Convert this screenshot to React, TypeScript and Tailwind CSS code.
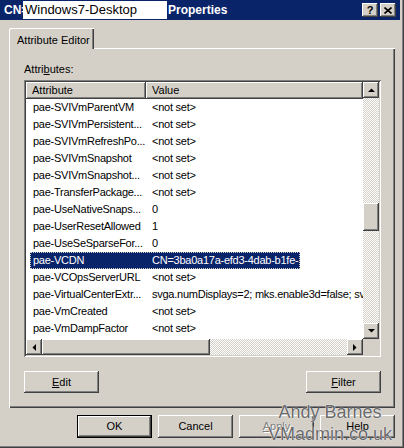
import React from 'react';

// classic 3D edges
const raised =
  'shadow-[inset_-1px_-1px_#404040,inset_1px_1px_#ffffff,inset_-2px_-2px_#808080,inset_2px_2px_#d4d0c8]';
const sunken =
  'shadow-[inset_1px_1px_#808080,inset_-1px_-1px_#ffffff,inset_2px_2px_#404040,inset_-2px_-2px_#d4d0c8]';
const checker =
  'bg-[conic-gradient(#ffffff_90deg,#d4d0c8_90deg_180deg,#ffffff_180deg_270deg,#d4d0c8_270deg)] bg-[length:2px_2px]';

interface Row {
  name: string;
  value: string;
  selected?: boolean;
}

const rows: Row[] = [
  { name: 'pae-SVIVmParentVM', value: '<not set>' },
  { name: 'pae-SVIVmPersistent...', value: '<not set>' },
  { name: 'pae-SVIVmRefreshPo...', value: '<not set>' },
  { name: 'pae-SVIVmSnapshot', value: '<not set>' },
  { name: 'pae-SVIVmSnapshot...', value: '<not set>' },
  { name: 'pae-TransferPackage...', value: '<not set>' },
  { name: 'pae-UseNativeSnaps...', value: '0' },
  { name: 'pae-UserResetAllowed', value: '1' },
  { name: 'pae-UseSeSparseFor...', value: '0' },
  { name: 'pae-VCDN', value: 'CN=3ba0a17a-efd3-4dab-b1fe-', selected: true },
  { name: 'pae-VCOpsServerURL', value: '<not set>' },
  { name: 'pae-VirtualCenterExtr...', value: 'svga.numDisplays=2; mks.enable3d=false; svga.vramSize=' },
  { name: 'pae-VmCreated', value: '<not set>' },
  { name: 'pae-VmDampFactor', value: '<not set>' },
  { name: 'pae-VmGuestCustomiz...', value: '{F7a61d9d-4FC3-4D2F-9B1F-7C2D}' },
];

const Arrow: React.FC<{ dir: 'up' | 'down' | 'left' | 'right' }> = ({ dir }) => {
  const pts = {
    up: '0,4 7,4 3.5,0.5',
    down: '0,0 7,0 3.5,3.5',
    left: '4,0 4,7 0.5,3.5',
    right: '0,0 0,7 3.5,3.5',
  }[dir];
  const vertical = dir === 'up' || dir === 'down';
  return (
    <svg width={vertical ? 7 : 4} height={vertical ? 4 : 7} viewBox={vertical ? '0 0 7 4' : '0 0 4 7'}>
      <polygon points={pts} fill="#000" />
    </svg>
  );
};

const ScrollButton: React.FC<{ dir: 'up' | 'down' | 'left' | 'right' }> = ({ dir }) => (
  <div className={`flex h-[16px] w-[16px] shrink-0 items-center justify-center bg-[#d4d0c8] ${raised}`}>
    <Arrow dir={dir} />
  </div>
);

const Button: React.FC<{ children: React.ReactNode; tall?: boolean; isDefault?: boolean; disabled?: boolean }> = ({
  children,
  tall,
  isDefault,
  disabled,
}) => (
  <div
    className={`flex w-[75px] items-center justify-center bg-[#d4d0c8] ${tall ? 'h-[23px]' : 'h-[22px]'} ${
      isDefault
        ? 'shadow-[inset_0_0_0_1px_#000000,inset_-2px_-2px_#404040,inset_2px_2px_#ffffff,inset_-3px_-3px_#808080]'
        : raised
    } ${disabled ? 'text-[#808080] [text-shadow:1px_1px_#ffffff]' : 'text-black'}`}
  >
    {children}
  </div>
);

export default function App() {
  return (
    <div className="relative h-[448px] w-[404px] overflow-hidden bg-[#d4d0c8] pb-[2px] pr-[4px] font-['Liberation_Sans',Arial,sans-serif] text-[11px] text-black shadow-[inset_-1px_-1px_#404040,inset_-2px_-2px_#808080]">
      {/* Title bar */}
      <div className="flex h-[20px] items-center bg-[#0a246a] text-white">
        <span className="ml-[4px] w-[19px] overflow-hidden whitespace-nowrap text-[12px] font-bold">CN=</span>
        <div className="flex h-[18px] w-[144px] items-center bg-white pl-[2px] text-[13px] text-black">
          Windows7-Desktop
        </div>
        <span className="ml-[1px] text-[12px] font-bold">Properties</span>
        <div className="ml-auto mr-[4px] flex gap-[2px]">
          <div className={`flex h-[14px] w-[16px] items-center justify-center bg-[#d4d0c8] text-[11px] font-bold text-black ${raised}`}>
            ?
          </div>
          <div className={`flex h-[14px] w-[16px] items-center justify-center bg-[#d4d0c8] ${raised}`}>
            <svg width="8" height="7" viewBox="0 0 8 7">
              <path d="M0.5 0.5 L7.5 6.5 M7.5 0.5 L0.5 6.5" stroke="#000" strokeWidth="1.6" />
            </svg>
          </div>
        </div>
      </div>

      {/* Body */}
      <div className="flex flex-col pl-[9px] pr-[5px] pt-[8px]">
        <div className="relative z-10 -mb-[1px] h-[21px] w-[85px] rounded-tl-[2px] bg-[#d4d0c8] pl-[8px] pt-[4px] shadow-[inset_1px_1px_#ffffff,inset_-1px_0_#404040,inset_-2px_0_#808080]">
          Attribute Editor
        </div>

        <div className="flex h-[360px] flex-col pl-[15px] pr-[14px] pt-[14px] shadow-[inset_1px_1px_#ffffff,inset_-1px_-1px_#404040,inset_-2px_-2px_#808080]">
          <div className="h-[14px] leading-[14px]">
            Attri<span className="underline">b</span>utes:
          </div>

          {/* List view */}
          <div className={`mt-[4px] flex h-[277px] w-[357px] flex-col bg-white p-[2px] ${sunken}`}>
            <div className="flex min-h-0 flex-1">
              <div className="min-w-0 flex-1 overflow-hidden tracking-[-0.25px]">
                <div className="flex h-[17px] tracking-normal">
                  <div className={`flex w-[120px] shrink-0 items-center bg-[#d4d0c8] pl-[6px] ${raised}`}>Attribute</div>
                  <div className={`flex flex-1 items-center bg-[#d4d0c8] pl-[6px] ${raised}`}>Value</div>
                </div>
                {rows.map((r) =>
                  r.selected ? (
                    <div key={r.name} className="flex h-[17px] whitespace-nowrap leading-[17px]">
                      <div className="ml-[4px] flex bg-[#0a246a] text-white outline-1 -outline-offset-1 outline-dotted outline-[#d4d0c8]">
                        <div className="w-[116px] shrink-0 pl-[3px]">{r.name}</div>
                        <div className="pl-[6px] pr-[2px]">{r.value}</div>
                      </div>
                    </div>
                  ) : (
                    <div key={r.name} className="flex h-[17px] whitespace-nowrap leading-[17px]">
                      <div className="w-[120px] shrink-0 overflow-hidden pl-[7px]">{r.name}</div>
                      <div className="pl-[6px]">{r.value}</div>
                    </div>
                  )
                )}
              </div>

              {/* Vertical scrollbar */}
              <div className="flex w-[16px] flex-col">
                <ScrollButton dir="up" />
                <div className={`flex flex-1 flex-col ${checker}`}>
                  <div className="h-[105px]" />
                  <div className={`h-[28px] w-[16px] bg-[#d4d0c8] ${raised}`} />
                </div>
                <ScrollButton dir="down" />
              </div>
            </div>

            {/* Horizontal scrollbar */}
            <div className="flex h-[16px]">
              <ScrollButton dir="left" />
              <div className={`flex flex-1 ${checker}`}>
                <div className={`h-[16px] w-[168px] bg-[#d4d0c8] ${raised}`} />
              </div>
              <ScrollButton dir="right" />
              <div className="h-[16px] w-[16px] bg-[#d4d0c8]" />
            </div>
          </div>

          <div className="mt-[14px] flex justify-between">
            <Button>
              <span className="underline">E</span>dit
            </Button>
            <Button>
              <span className="underline">F</span>ilter
            </Button>
          </div>
        </div>

        <div className="mt-[7px] flex justify-end gap-[6px]">
          <Button tall isDefault>
            OK
          </Button>
          <Button tall>Cancel</Button>
          <Button tall disabled>
            <span className="underline">A</span>pply
          </Button>
          <Button tall>Help</Button>
        </div>
      </div>

      {/* watermark */}
      <div className="pointer-events-none absolute left-[268px] top-[401px] flex w-[124px] flex-col items-center text-[18px] leading-[22px] text-[#6a6a6a] [text-shadow:0_0_1px_#ffffff,0_0_1px_#ffffff]">
        <span>Andy Barnes</span>
        <span>VMadmin.co.uk</span>
      </div>
    </div>
  );
}
